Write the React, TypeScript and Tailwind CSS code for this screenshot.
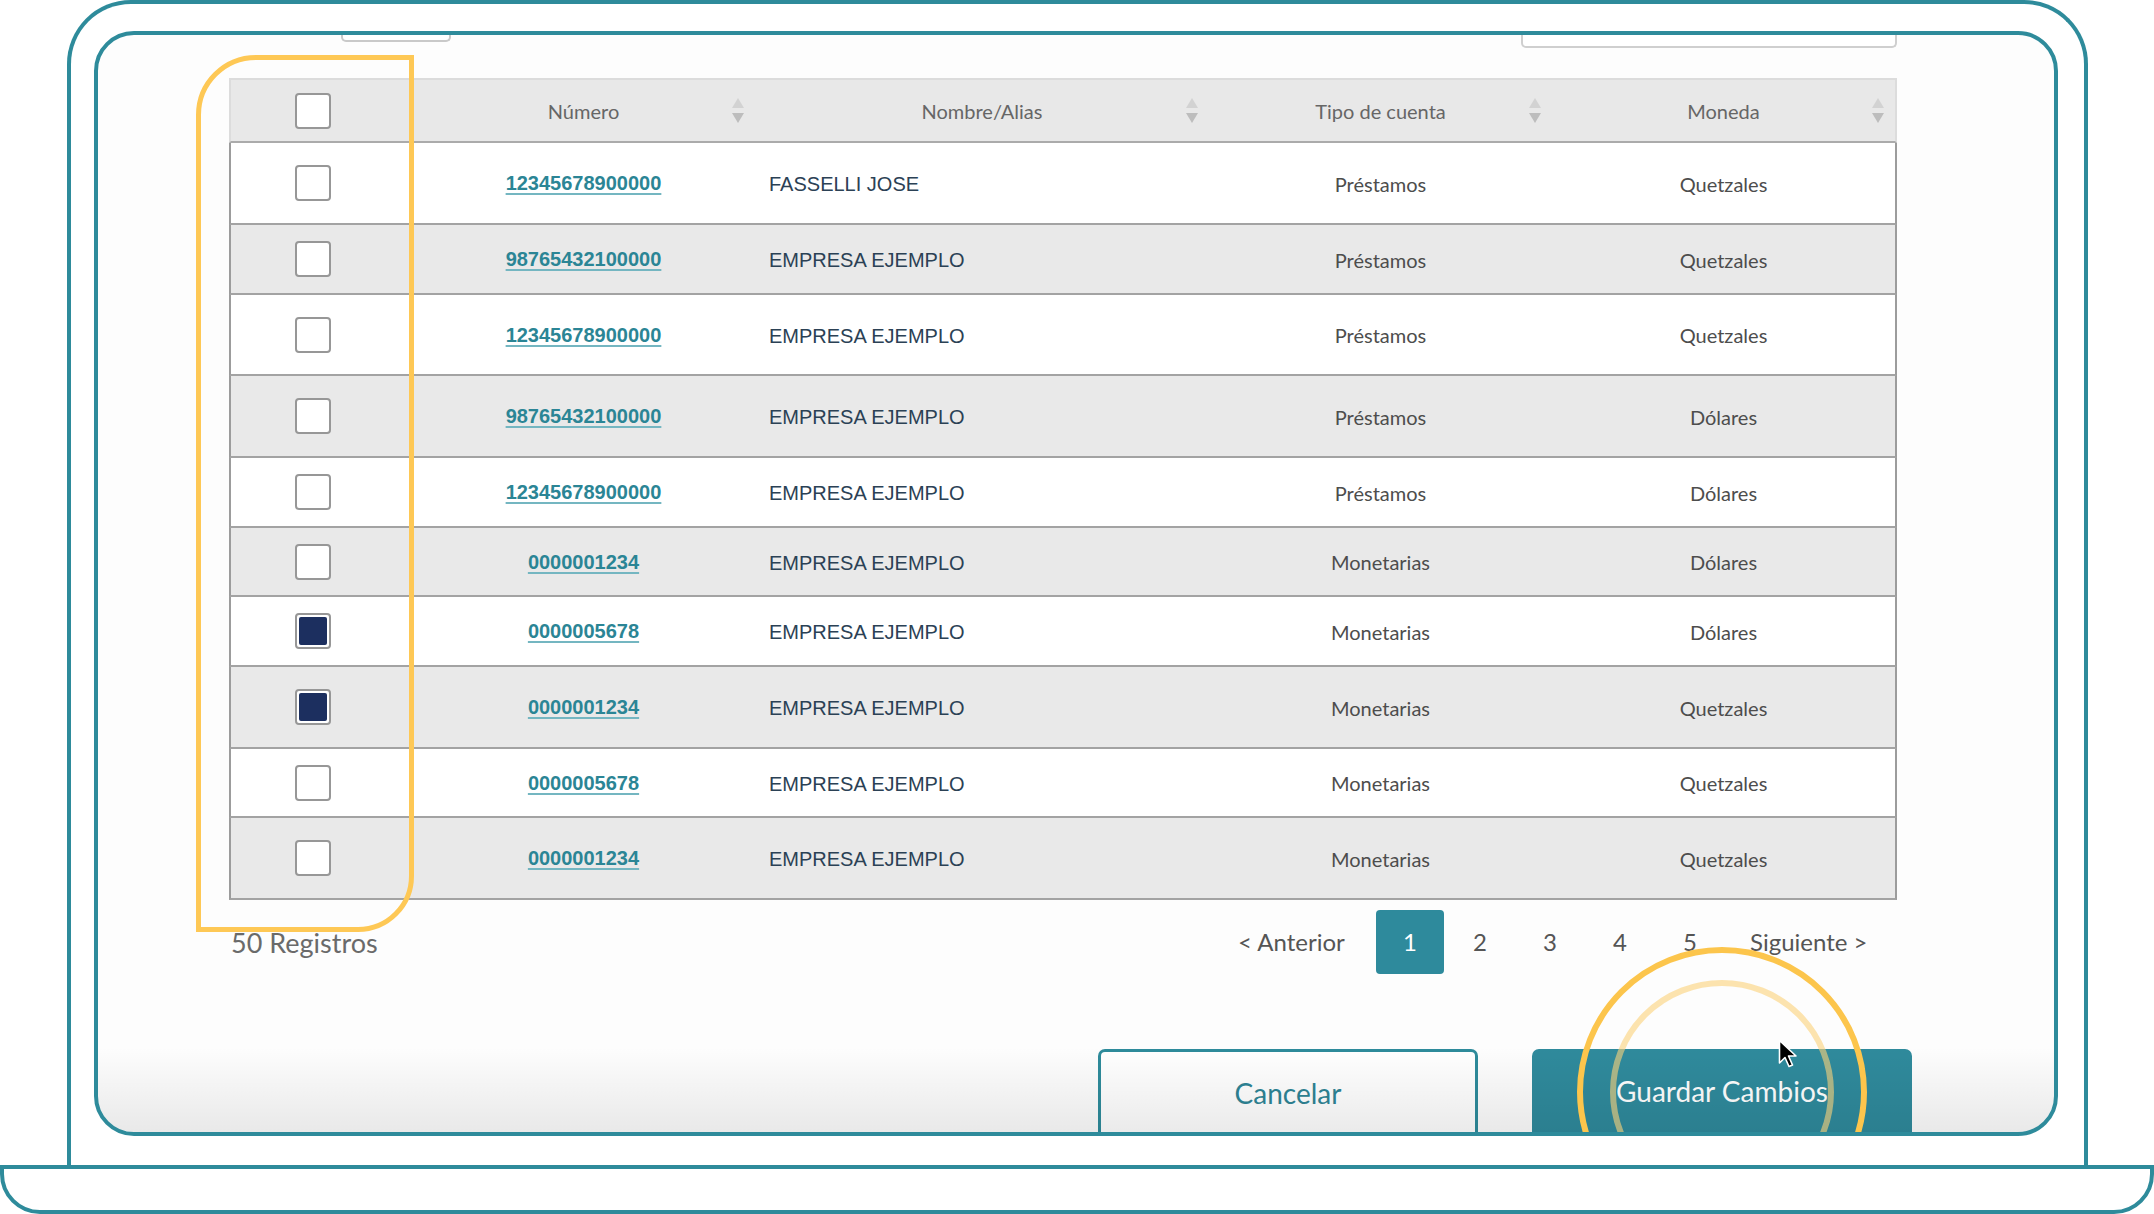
import React from 'react';

type Row = {
  num: string;
  name: string;
  tipo: string;
  moneda: string;
  h: string;
  bg: string;
  checked?: boolean;
};

const rows: Row[] = [
  { num: '12345678900000', name: 'FASSELLI JOSE', tipo: 'Préstamos', moneda: 'Quetzales', h: 'h-[82px]', bg: 'bg-white' },
  { num: '98765432100000', name: 'EMPRESA EJEMPLO', tipo: 'Préstamos', moneda: 'Quetzales', h: 'h-[70px]', bg: 'bg-[#e9e9e9]' },
  { num: '12345678900000', name: 'EMPRESA EJEMPLO', tipo: 'Préstamos', moneda: 'Quetzales', h: 'h-[81px]', bg: 'bg-white' },
  { num: '98765432100000', name: 'EMPRESA EJEMPLO', tipo: 'Préstamos', moneda: 'Dólares', h: 'h-[82px]', bg: 'bg-[#e9e9e9]' },
  { num: '12345678900000', name: 'EMPRESA EJEMPLO', tipo: 'Préstamos', moneda: 'Dólares', h: 'h-[70px]', bg: 'bg-white' },
  { num: '0000001234', name: 'EMPRESA EJEMPLO', tipo: 'Monetarias', moneda: 'Dólares', h: 'h-[69px]', bg: 'bg-[#e9e9e9]' },
  { num: '0000005678', name: 'EMPRESA EJEMPLO', tipo: 'Monetarias', moneda: 'Dólares', h: 'h-[70px]', bg: 'bg-white', checked: true },
  { num: '0000001234', name: 'EMPRESA EJEMPLO', tipo: 'Monetarias', moneda: 'Quetzales', h: 'h-[82px]', bg: 'bg-[#e9e9e9]', checked: true },
  { num: '0000005678', name: 'EMPRESA EJEMPLO', tipo: 'Monetarias', moneda: 'Quetzales', h: 'h-[69px]', bg: 'bg-white' },
  { num: '0000001234', name: 'EMPRESA EJEMPLO', tipo: 'Monetarias', moneda: 'Quetzales', h: 'h-[82px]', bg: 'bg-[#e9e9e9]' },
];

const cols = 'grid grid-cols-[181px_343px_454px_343px_343px]';

const SortIcon = () => (
  <svg width="12" height="26" viewBox="0 0 12 26" className="shrink-0">
    <path d="M6 0 L12 10 L0 10 Z" fill="#d2d2d2" />
    <path d="M0 15 L12 15 L6 25 Z" fill="#bdbdbd" />
  </svg>
);

const Checkbox = ({ checked }: { checked?: boolean }) => (
  <div className="w-[36px] h-[36px] rounded-[4px] border-2 border-[#979797] bg-white p-[2px]">
    {checked && <div className="w-full h-full rounded-[2px] bg-[#1c2f5f]" />}
  </div>
);

const HeaderCell = ({ label }: { label: string }) => (
  <div className="flex items-center pl-[23px] pr-[11px]">
    <span className="flex-1 text-center">{label}</span>
    <SortIcon />
  </div>
);

const Cursor = () => (
  <svg width="22" height="30" viewBox="0 0 22 30">
    <path
      d="M1.5 1.5 L1.5 24 L7 18.5 L11 27.5 L14.5 26 L10.5 17 L18 17 Z"
      fill="#000"
      stroke="#fff"
      strokeWidth="1.6"
      strokeLinejoin="round"
    />
  </svg>
);

const App: React.FC = () => {
  return (
    <div className="w-[2154px] h-[1214px] bg-white overflow-hidden flex flex-col">
      {/* Laptop lid */}
      <div className="ml-[67px] w-[2021px] h-[1165px] border-[4px] border-b-0 border-[#2e8b9b] rounded-t-[64px] pl-[23px] pt-[27px]">
        {/* Screen */}
        <div className="relative w-[1964px] h-[1105px] border-[4px] border-[#2e8b9b] rounded-[40px] overflow-hidden bg-[#fdfdfd] font-[Lato,sans-serif]">
          {/* cut-off controls at the top */}
          <div className="flex h-[13px]">
            <div className="ml-[243px] w-[110px] h-[7px] border-2 border-t-0 border-[#c9c9c9] rounded-b-[5px] bg-white" />
            <div className="ml-[1070px] w-[376px] h-[13px] border-2 border-t-0 border-[#cfcfcf] rounded-b-[5px] bg-white" />
          </div>

          {/* Table */}
          <div className="mt-[30px] ml-[131px] w-[1668px]">
            <div className={`${cols} h-[65px] bg-[#e8e8e8] border-t-2 border-x-2 border-[#dcdcdc] border-b-2 border-b-[#ababab] text-[20px] text-[#666]`}>
              <div className="flex items-center pl-[64px]">
                <Checkbox />
              </div>
              <HeaderCell label="Número" />
              <HeaderCell label="Nombre/Alias" />
              <HeaderCell label="Tipo de cuenta" />
              <HeaderCell label="Moneda" />
            </div>

            {rows.map((row, i) => (
              <div
                key={i}
                className={`${cols} ${row.h} ${row.bg} border-x-2 border-x-[#9c9c9c] border-b-2 border-b-[#a3a3a3]`}
              >
                <div className="flex items-center pl-[64px]">
                  <Checkbox checked={row.checked} />
                </div>
                <div className="flex items-center justify-center">
                  <span className="font-['Liberation_Sans',Arial,sans-serif] font-bold text-[20px] text-[#2b8595] underline decoration-[#74b6c1] decoration-2 underline-offset-[3px]">
                    {row.num}
                  </span>
                </div>
                <div className="flex items-center pl-[14px] pt-[2px] font-['Liberation_Sans',Arial,sans-serif] text-[20px] text-[#2b4155]">
                  {row.name}
                </div>
                <div className="flex items-center justify-center pt-[1px] text-[20px] text-[#4d4d4d]">{row.tipo}</div>
                <div className="flex items-center justify-center pt-[1px] text-[20px] text-[#4d4d4d]">{row.moneda}</div>
              </div>
            ))}
          </div>

          {/* Footer: count + pagination */}
          <div className="mt-[10px] ml-[131px] w-[1668px] h-[64px] flex items-center">
            <span className="pl-[2px] pt-[3px] text-[27px] text-[#6a6a6a]">50 Registros</span>
            <div className="ml-auto mr-[29px] flex items-center text-[24px] text-[#555]">
              <span className="w-[138px]">&lt; Anterior</span>
              <div className="flex gap-[2px]">
                <span className="w-[68px] h-[64px] flex items-center justify-center rounded-[4px] bg-[#2e8a9c] text-white">1</span>
                <span className="w-[68px] h-[64px] flex items-center justify-center">2</span>
                <span className="w-[68px] h-[64px] flex items-center justify-center">3</span>
                <span className="w-[68px] h-[64px] flex items-center justify-center">4</span>
                <span className="w-[68px] h-[64px] flex items-center justify-center">5</span>
              </div>
              <span className="ml-[26px] w-[118px]">Siguiente &gt;</span>
            </div>
          </div>

          {/* Action buttons */}
          <div className="mt-[75px] ml-[1000px] flex gap-[54px]">
            <button className="w-[380px] h-[90px] pb-[6px] flex items-center justify-center border-[3px] border-b-0 border-[#2e8b9b] rounded-t-[7px] bg-white text-[28px] text-[#2e8495]">
              Cancelar
            </button>
            <button className="w-[380px] h-[90px] pb-[6px] flex items-center justify-center rounded-t-[7px] bg-[#2f8a9c] text-[28px] text-white">
              Guardar Cambios
            </button>
          </div>

          {/* bottom shading */}
          <div className="pointer-events-none absolute inset-x-0 bottom-0 h-[85px] bg-linear-to-b from-transparent to-black/[0.08]" />

          {/* highlight around checkbox column */}
          <div className="pointer-events-none absolute left-[98px] top-[20px] w-[218px] h-[877px] border-[5px] border-[#fec855] rounded-tl-[60px] rounded-br-[56px]" />

          {/* click rings */}
          <div className="pointer-events-none absolute left-[1479px] top-[912px] w-[290px] h-[290px] rounded-full border-[6px] border-[#fcc54c]" />
          <div className="pointer-events-none absolute left-[1512px] top-[945px] w-[224px] h-[224px] rounded-full border-[6px] border-[#fcd27a]/60" />

          {/* mouse pointer */}
          <div className="pointer-events-none absolute left-[1680px] top-[1004px]">
            <Cursor />
          </div>
        </div>
      </div>

      {/* Laptop base */}
      <div className="w-full h-[49px] border-[4px] border-[#2e8b9b] rounded-b-[40px]" />
    </div>
  );
};

export default App;
